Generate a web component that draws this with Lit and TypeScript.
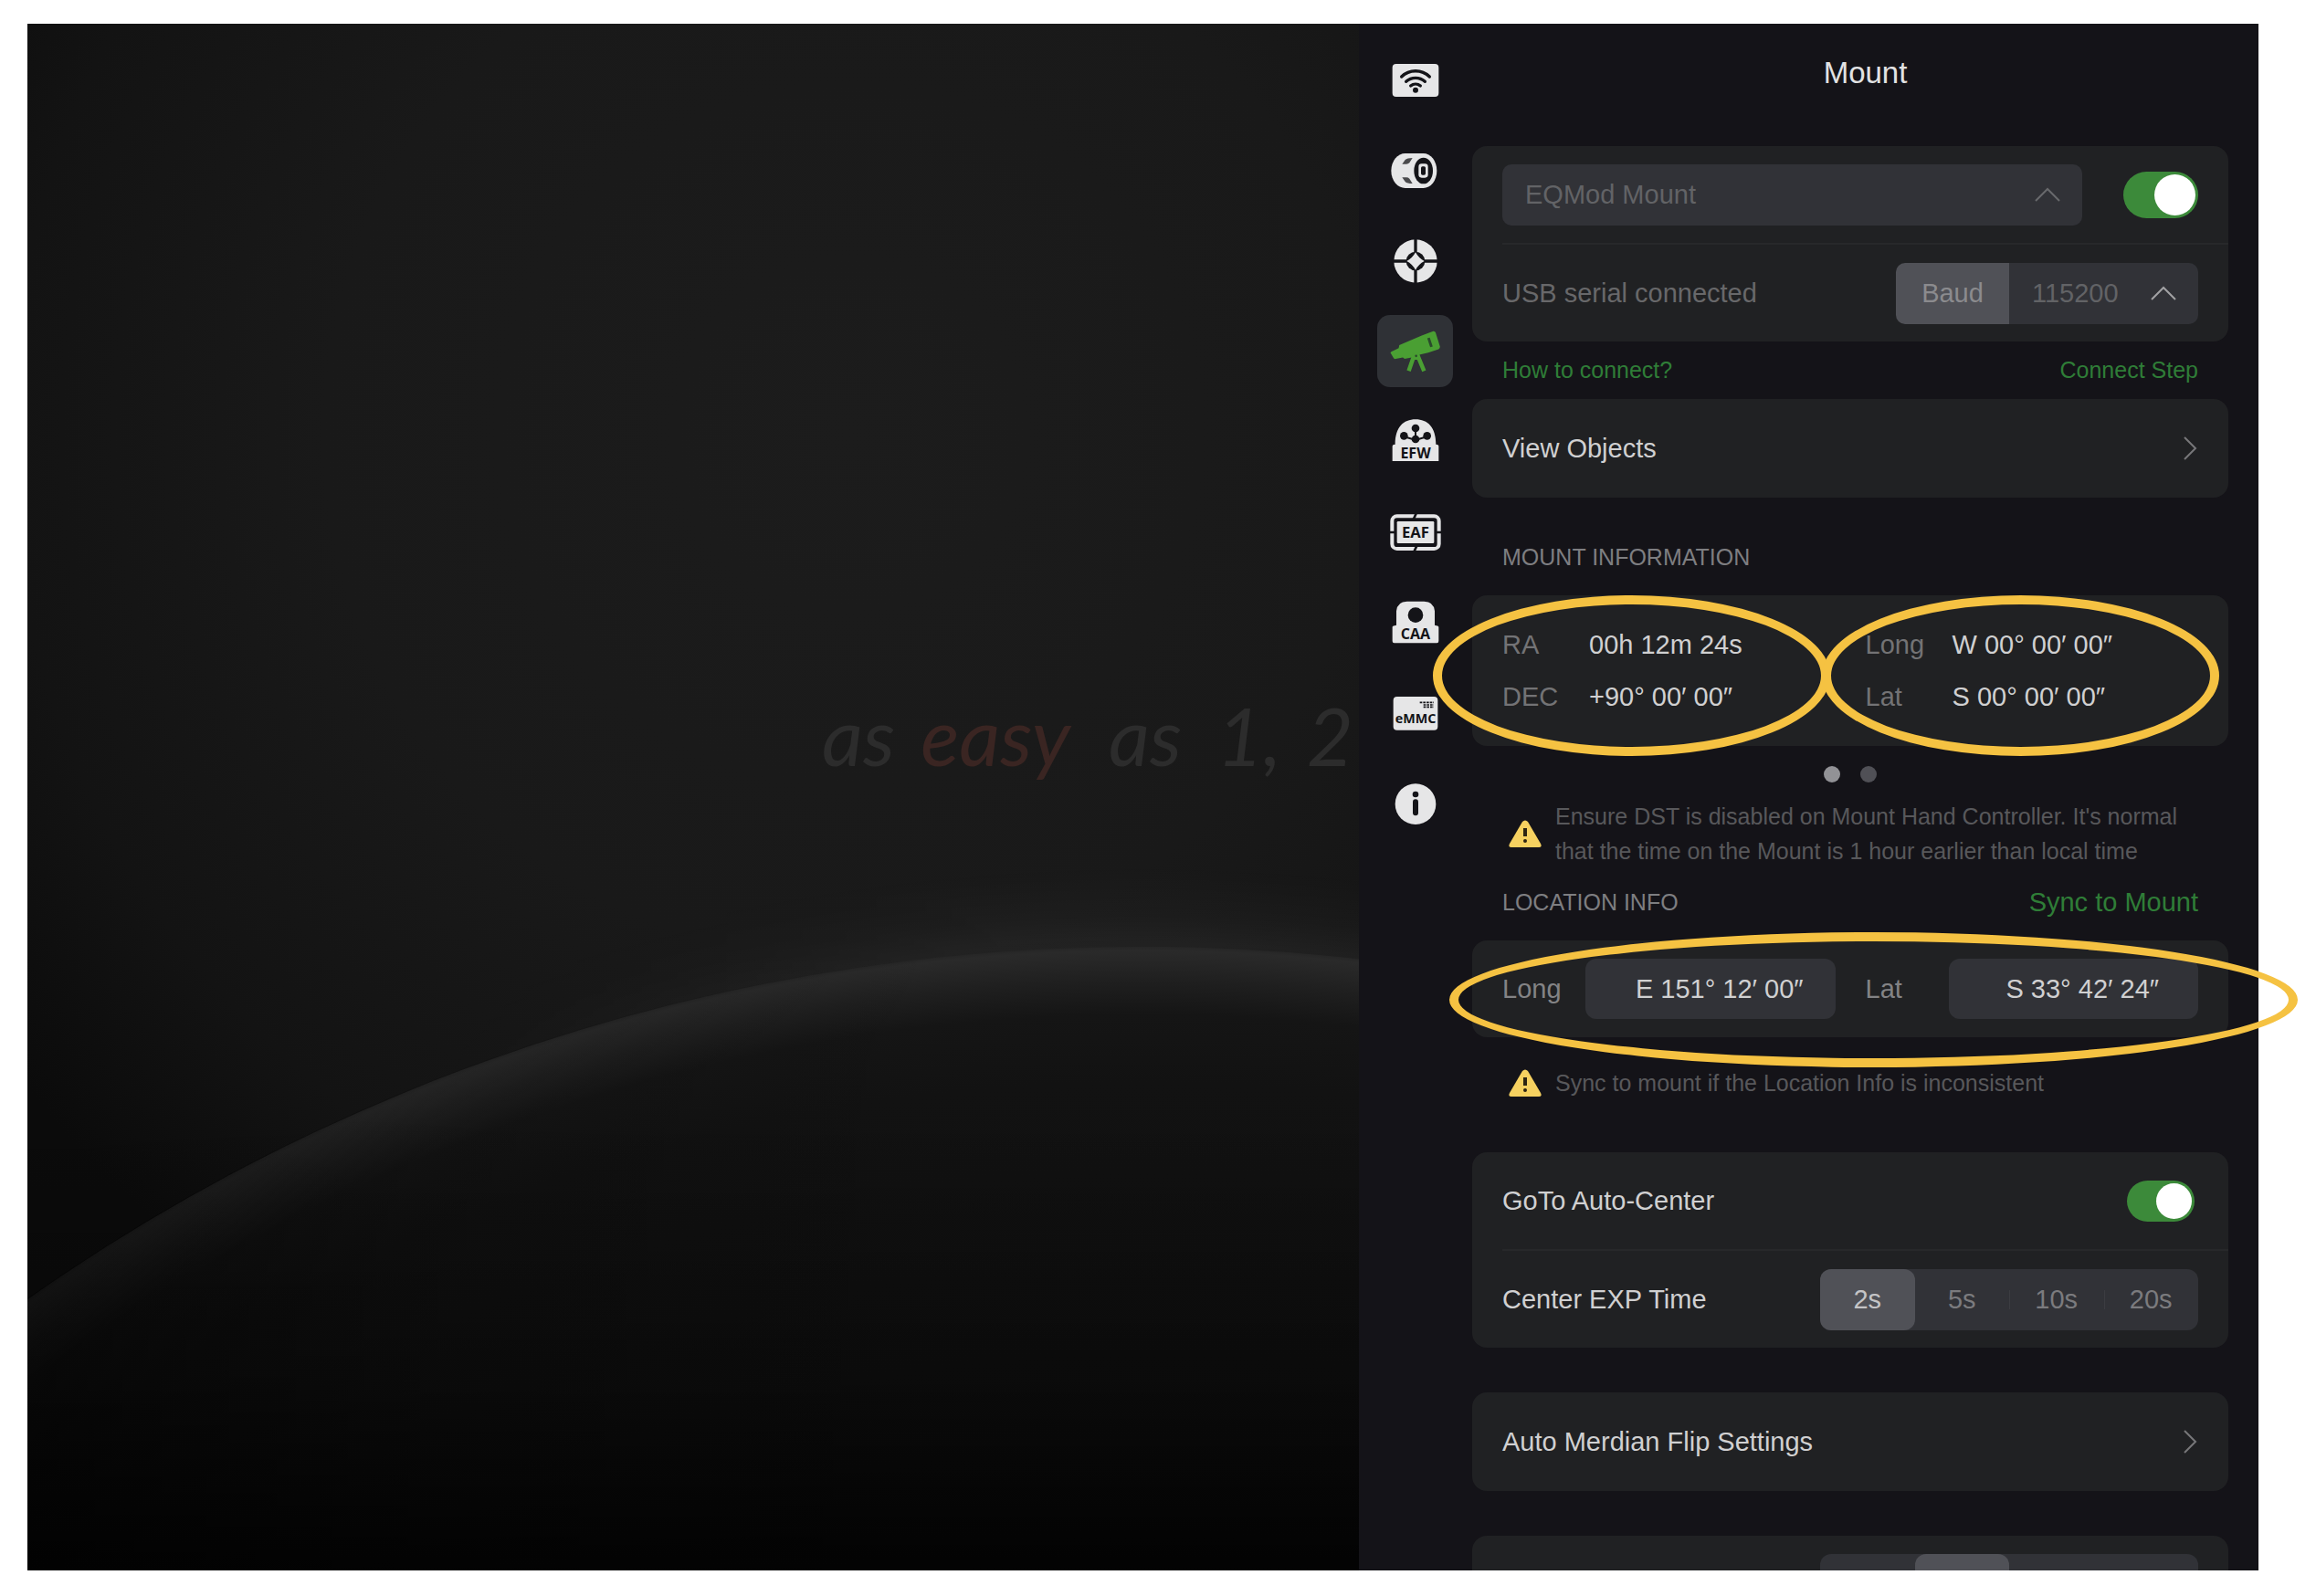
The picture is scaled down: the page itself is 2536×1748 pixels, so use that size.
import { LitElement, html, svg, css, nothing } from "lit";
import { customElement, property, state } from "lit/decorators.js";
import { classMap } from "lit/directives/class-map.js";

const icons: Record<string, unknown> = {
  wifi: svg`
    <rect x="-76" y="-54" width="152" height="108" rx="12" fill="currentColor"/>
    <g fill="none" stroke="#141418" stroke-width="10" stroke-linecap="round">
      <path d="M-46 -12 A66 66 0 0 1 46 -12"/>
      <path d="M-31 4 A46 46 0 0 1 31 4"/>
      <path d="M-16 18 A25 25 0 0 1 16 18"/>
    </g>
    <circle cx="0" cy="32" r="9" fill="#141418"/>`,
  camera: svg`
    <path d="M-34 -57 H26 A44 57 0 0 1 26 57 H-34 A46 57 0 0 1 -34 -57Z" fill="currentColor"/>
    <path d="M-44 -22 L-34 -36 Q-28 -42 -10 -42 L-20 -26 Q-24 -22 -30 -22Z M-44 22 L-34 36 Q-28 42 -10 42 L-20 26 Q-24 22 -30 22Z" fill="#4a4a4c"/>
    <ellipse cx="26" cy="0" rx="31" ry="43" fill="#141418"/>
    <rect x="10" y="-23" width="31" height="46" rx="10" fill="currentColor"/>
    <rect x="18" y="-14" width="15" height="28" rx="5" fill="#141418"/>`,
  guide: svg`
    <circle cx="0" cy="0" r="71" fill="currentColor"/>
    <circle cx="0" cy="0" r="31" fill="#141418"/>
    <path d="M-72 0 H72 M0 -72 V72" stroke="#141418" stroke-width="10"/>
    <path d="M0 -29 Q10 -10 29 0 Q10 10 0 29 Q-10 10 -29 0 Q-10 -10 0 -29Z" fill="currentColor"/>`,
  mount: svg`
    <g transform="translate(-1 2) scale(0.97)">
      <path d="M-80 -2 L-56 -14 L-54 -24 L22 -56 L61 -71 Q67 -72 69 -66 L84 -18 Q84 -12 79 -10 L44 2 L14 9 L8 14 L-36 23 L-42 18 L-66 23 Q-72 24 -74 19 L-84 2 Z" fill="currentColor"/>
      <path d="M-2 6 L-22 64 M6 6 L30 64" stroke="currentColor" stroke-width="14"/>
      <path d="M-8 8 H14 L12 26 H-6Z" fill="currentColor"/>
      <circle cx="3" cy="13" r="4" fill="#2a4a2c"/>
      <path d="M45 -48 L55 -18" stroke="#2a4a2c" stroke-width="9"/>
    </g>`,
  efw: svg`
    <path d="M-76 63 V14 Q-76 8 -67 8 C-67 -48 -40 -74 0 -74 C40 -74 67 -48 67 8 Q76 8 76 14 V63Z" fill="currentColor"/>
    <path d="M-37 -17 Q-20 -12 0 -6 Q20 -12 37 -17 M0 -44 V-6" stroke="#141418" stroke-width="6" fill="none"/>
    <circle cx="0" cy="-45" r="13" fill="#141418"/><circle cx="-38" cy="-20" r="13" fill="#141418"/>
    <circle cx="38" cy="-20" r="13" fill="#141418"/><circle cx="0" cy="-9" r="13" fill="#141418"/>
    <text class="glyph" x="0" y="54" font-size="48">EFW</text>`,
  eaf: svg`
    <rect x="-77" y="-53" width="154" height="107" rx="16" fill="none" stroke="currentColor" stroke-width="12"/>
    <path d="M-8 -40 L4 -66 M-6 66 L6 40 M-90 0 H-66 M66 0 H90" stroke="#141418" stroke-width="8"/>
    <rect x="-61" y="-36" width="122" height="72" rx="4" fill="currentColor"/>
    <text class="glyph" x="0" y="18" font-size="50">EAF</text>`,
  caa: svg`
    <path d="M-76 64 V14 Q-76 10 -63 8 V-38 Q-60 -70 -28 -70 H28 Q60 -70 63 -38 V8 Q76 10 76 14 V60 Q76 67 70 67 H-70 Q-76 67 -76 60Z" fill="currentColor"/>
    <circle cx="0" cy="-25" r="25" fill="#141418"/>
    <text class="glyph" x="0" y="55" font-size="48">CAA</text>`,
  emmc: svg`
    <rect x="-73" y="-54" width="146" height="110" rx="12" fill="currentColor"/>
    <path d="M14 -35 H60 M26 -27 H60 M26 -20 H60" stroke="#141418" stroke-width="5" stroke-dasharray="8 3"/>
    <text class="glyph" x="0" y="33" font-size="43">eMMC</text>`,
  info: svg`
    <circle cx="0" cy="2" r="67" fill="currentColor"/>
    <circle cx="0" cy="-30" r="10" fill="#141418"/>
    <rect x="-9" y="-14" width="18" height="54" rx="9" fill="#141418"/>`,
};

const chevronUp = html`<svg class="chevron-up" viewBox="0 0 28 16" aria-hidden="true"><path d="M1 15 L14 2 L27 15"/></svg>`;
const chevronRight = html`<svg class="chevron-right" viewBox="0 0 16 26" aria-hidden="true"><path d="M1 1 L13 13 L1 25"/></svg>`;
const warning = html`<svg class="warning" viewBox="0 0 38 32" aria-hidden="true">
  <path d="M16 3 Q19 0 22 3 L36 27 Q38 31 34 31 H4 Q0 31 2 27Z" fill="#f6d160"/>
  <path d="M19 10 V19" stroke="#2c2412" stroke-width="4"/><circle cx="19" cy="24" r="2" fill="#2c2412"/></svg>`;

/* Settings rail with one button per device. */
@customElement("device-rail")
class DeviceRail extends LitElement {
  @state() private active = "mount";

  static styles = css`
    :host { display: flex; flex-direction: column; gap: 20px; padding: 22px 21px 0 20px; }
    .item {
      display: grid; place-items: center; width: 83px; height: 79px; padding: 0;
      border: 0; border-radius: 14px; background: none; color: #e6e6e7; cursor: pointer;
    }
    .item.on { background: #2f3136; color: #4a9f33; }
    .icon { width: 60px; height: 60px; }
    .glyph {
      font-family: "Open Sans", "Noto Sans", sans-serif; font-weight: 700;
      text-anchor: middle; fill: #141418;
    }
  `;

  render() {
    return Object.keys(icons).map(
      (id) => html`<button
        class=${classMap({ item: true, on: this.active === id })}
        aria-label=${id}
        @click=${() => (this.active = id)}
      ><svg class="icon" viewBox="-90 -90 180 180">${icons[id]}</svg></button>`
    );
  }
}

/* Background artwork behind the slogan. */
@customElement("start-canvas")
class StartCanvas extends LitElement {
  static styles = css`
    :host { display: block; position: relative; overflow: hidden; background: #1a1a1a; }
    .art { position: absolute; inset: 0; width: 100%; height: 100%; }
    .slogan {
      position: relative; margin: 0; padding: 724px 0 0 870px; white-space: nowrap;
      font: italic 400 88px/110px Lato, "Open Sans", sans-serif; color: #2c2c2c;
      display: flex; gap: 28px;
    }
    .accent { color: #3a2522; margin-right: 14px; }
    .count { margin-left: 10px; }
  `;

  render() {
    return html`
      <svg class="art" viewBox="0 0 1458 1694" preserveAspectRatio="xMaxYMid slice" aria-hidden="true">
        <defs>
          <radialGradient id="sky" gradientUnits="userSpaceOnUse" cx="900" cy="450" r="1150">
            <stop offset="0" stop-color="#1c1c1c"/><stop offset="0.5" stop-color="#191919"/>
            <stop offset="0.8" stop-color="#131313"/><stop offset="1" stop-color="#0b0b0b"/>
          </radialGradient>
          <radialGradient id="glow" gradientUnits="userSpaceOnUse" cx="1220" cy="3131" r="2210">
            <stop offset="0.957" stop-color="#fff" stop-opacity="0.05"/>
            <stop offset="0.975" stop-color="#fff" stop-opacity="0.02"/>
            <stop offset="1" stop-color="#fff" stop-opacity="0"/>
          </radialGradient>
          <radialGradient id="planet" gradientUnits="userSpaceOnUse" cx="1220" cy="3131" r="2120">
            <stop offset="0.65" stop-color="#0c0c0c"/><stop offset="0.93" stop-color="#121212"/>
            <stop offset="0.965" stop-color="#151515"/><stop offset="0.982" stop-color="#1f1f1f"/>
            <stop offset="0.998" stop-color="#2a2a2a"/><stop offset="1" stop-color="#262626"/>
          </radialGradient>
          <linearGradient id="side" gradientUnits="userSpaceOnUse" x1="0" x2="1458" y1="0" y2="0">
            <stop offset="0" stop-color="#000" stop-opacity="0.5"/>
            <stop offset="0.3" stop-color="#000" stop-opacity="0.15"/>
            <stop offset="0.7" stop-color="#000" stop-opacity="0"/>
          </linearGradient>
          <linearGradient id="sideGlow" x1="0" x2="1" y1="0" y2="0">
            <stop offset="0.3" stop-color="#000"/><stop offset="0.75" stop-color="#fff"/>
          </linearGradient>
          <mask id="fade"><rect width="1458" height="1694" fill="url(#sideGlow)"/></mask>
          <linearGradient id="floor" x1="0" x2="0" y1="0" y2="1">
            <stop offset="0.7" stop-color="#000" stop-opacity="0"/>
            <stop offset="0.88" stop-color="#000" stop-opacity="0.3"/>
            <stop offset="1" stop-color="#000" stop-opacity="0.8"/>
          </linearGradient>
        </defs>
        <rect width="1458" height="1694" fill="url(#sky)"/>
        <g mask="url(#fade)"><circle cx="1220" cy="3131" r="2210" fill="url(#glow)"/></g>
        <circle cx="1220" cy="3131" r="2120" fill="url(#planet)"/>
        <circle cx="1220" cy="3131" r="2121" fill="url(#side)"/>
        <rect width="1458" height="1694" fill="url(#floor)"/>
      </svg>
      <p class="slogan"><span>as</span><span class="accent">easy</span><span>as</span><span class="count">1,</span><span>2</span></p>
    `;
  }
}

/* Row of mutually exclusive choices. */
@customElement("segment-choice")
class SegmentChoice extends LitElement {
  @property() name = "";
  @property({ type: Array }) options: string[] = [];
  @property({ type: Number }) selected = 0;

  static styles = css`
    :host { display: block; }
    .group {
      display: grid; grid-auto-flow: column; grid-auto-columns: 1fr; width: 414px; height: 67px;
      margin: 0; padding: 0; border: 0; border-radius: 12px; background: #313237;
    }
    .choice {
      display: grid; place-items: center; position: relative; border-radius: 12px;
      font-size: 29px; line-height: 36px; color: #7b7b7e; cursor: pointer;
    }
    .choice.on { background: #505157; color: #c4c4c6; }
    .choice.split::before {
      content: ""; position: absolute; left: 0; top: 23px; bottom: 23px; width: 1px; background: #3b3c41;
    }
    .radio { position: absolute; inset: 0; margin: 0; opacity: 0; cursor: pointer; }
  `;

  render() {
    return html`<fieldset class="group" aria-label=${this.name}>
      ${this.options.map(
        (text, i) => html`<label class=${classMap({
          choice: true,
          on: i === this.selected,
          split: i !== this.selected && i - 1 !== this.selected && i > 0,
        })}>
          <input class="radio" type="radio" name=${this.name} aria-label=${text || `Option ${i + 1}`}
            .checked=${i === this.selected} @change=${() => (this.selected = i)} />${text || nothing}</label>`
      )}
    </fieldset>`;
  }
}

@customElement("app-root")
class AppRoot extends LitElement {
  static styles = css`
    :host {
      display: block; box-sizing: border-box; height: 100vh; padding: 26px 63px 28px 30px;
      background: #fff; font-family: "Liberation Sans", Arial, sans-serif; font-size: 29px; line-height: 36px;
      color: #d0d0d1;
    }
    .screen {
      display: grid; grid-template-columns: 1458fr 985fr; grid-template-rows: minmax(0, 1fr);
      height: 100%; overflow-x: visible; overflow-y: clip; background: #141318;
    }
    .side { display: grid; grid-template-columns: auto minmax(0, 1fr); align-items: start; }
    .panel { display: flex; flex-direction: column; padding-right: 33px; }
    .title {
      margin: 0; padding: 34px 0 60px 33px; font-size: 33px; line-height: 40px; font-weight: 400;
      text-align: center; color: #e2e2e3;
    }
    .card { position: relative; border-radius: 16px; background: #202123; }
    .row {
      display: flex; align-items: center; justify-content: space-between; box-sizing: border-box;
      min-height: 106px; padding: 0 33px; gap: 33px;
    }
    .row + .row { min-height: 108px; padding-left: 0; margin-left: 33px; border-top: 2px solid #27282a; }
    .link-row { min-height: 108px; color: inherit; text-decoration: none; }
    .dim { color: #68686a; }
    .mid { color: #838385; }
    .spaced { margin-top: 49px; }
    .after-note { margin-top: 57px; }

    .picker {
      display: grid; grid-template-columns: minmax(0, 1fr) auto; align-items: center; height: 67px;
      border-radius: 10px; background: #313237; overflow: hidden;
    }
    .picker.wide { flex: 1; max-width: 635px; }
    .picker > .select { grid-area: 1 / 1 / 2 / 3; }
    .picker > .chevron-up { grid-area: 1 / 2 / 2 / 3; margin-right: 24px; pointer-events: none; }
    .select {
      appearance: none; width: 100%; height: 67px; padding: 0 60px 0 25px; border: 0; background: none;
      font: inherit; color: #626366;
    }
    .chevron-up { width: 28px; height: 16px; fill: none; stroke: #68696c; stroke-width: 2; }
    .chevron-right { width: 16px; height: 26px; fill: none; stroke: #77777a; stroke-width: 2; }
    .baud { display: flex; border-radius: 10px; overflow: hidden; }
    .baud .picker { width: 207px; border-radius: 0; }
    .baud .chevron-up { stroke: #a2a2a4; }
    .baud-label { width: 124px; line-height: 67px; text-align: center; background: #505157; color: #8b8b8e; }

    .toggle {
      appearance: none; box-sizing: border-box; display: flex; justify-content: flex-end;
      flex: none; width: 82px; height: 51px; margin: 0; padding: 3px; border-radius: 26px;
      background: #3b3c40; cursor: pointer;
    }
    .toggle:checked { background: #3c8a3a; }
    .toggle:not(:checked) { justify-content: flex-start; }
    .toggle::before { content: ""; width: 45px; height: 45px; border-radius: 50%; background: #fff; }
    .toggle.small { width: 74px; height: 45px; margin-right: 4px; }
    .toggle.small::before { width: 39px; height: 39px; }

    .links { display: flex; justify-content: space-between; padding: 13px 33px 14px; font-size: 25px; }
    .green { color: #2f7d37; text-decoration: none; }
    .section {
      margin: 0; padding: 49px 33px 26px; font-size: 25px; line-height: 32px; font-weight: 400; color: #7e7e81;
    }
    .section-row { display: flex; justify-content: space-between; padding: 20px 33px 25px; line-height: 34px; }
    .section-row .section { padding: 0; line-height: 34px; }
    .sync { padding: 0; border: 0; background: none; font: inherit; line-height: 34px; color: #2f7d37; cursor: pointer; }

    .pair { display: flex; gap: 33px; }
    .info { padding: 26px 33px 25px; }
    .facts { flex: 1; display: grid; grid-template-columns: 95px 1fr; margin: 0; line-height: 57px; }
    .facts .term { color: #737375; }
    .facts .value { margin: 0; }
    .field { flex: 1; display: grid; grid-template-columns: 91px minmax(0, 1fr); align-items: center; }
    .text {
      box-sizing: border-box; width: 100%; height: 66px; padding: 0 0 0 20px; border: 0; border-radius: 12px;
      background: #313237; font: inherit; color: inherit; text-align: center;
    }

    .dots { display: flex; justify-content: center; gap: 22px; padding: 22px 0 18px; }
    .dot { width: 18px; height: 18px; padding: 0; border: 0; border-radius: 50%; background: #505056; }
    .dot.on { background: #929296; }
    .note {
      display: flex; align-items: center; gap: 14px; margin: 0; padding: 0 33px 0 39px;
      font-size: 25px; line-height: 38px; color: #58585b;
    }
    .note.below { margin-top: 31px; }
    .warning { flex: none; width: 38px; height: 32px; }

    .mark {
      position: absolute; box-sizing: border-box; border: 10px solid #f5c242; border-radius: 50%;
      pointer-events: none;
    }
    .mark.first { left: -43px; width: 435px; top: 0; bottom: -11px; }
    .mark.second { right: 10px; width: 435px; top: 0; bottom: -11px; }
    .mark.third { left: -25px; right: -76px; top: -9px; bottom: -33px; }
  `;

  private facts(items: [string, string][]) {
    return html`<dl class="facts">
      ${items.map(([term, value]) => html`<dt class="term">${term}</dt><dd class="value">${value}</dd>`)}
    </dl>`;
  }

  render() {
    return html`
      <main class="screen">
        <start-canvas></start-canvas>
        <div class="side">
          <device-rail></device-rail>
          <section class="panel">
            <h1 class="title">Mount</h1>

            <div class="card">
              <div class="row">
                <div class="picker wide">
                  <select class="select" aria-label="Mount model"><option>EQMod Mount</option></select>
                  ${chevronUp}
                </div>
                <input class="toggle" type="checkbox" role="switch" aria-label="Mount connection" checked />
              </div>
              <div class="row">
                <span class="dim">USB serial connected</span>
                <div class="baud">
                  <label class="baud-label" for="baud">Baud</label>
                  <div class="picker">
                    <select class="select" id="baud"><option>115200</option></select>
                    ${chevronUp}
                  </div>
                </div>
              </div>
            </div>

            <div class="links">
              <a class="green" href="#help">How to connect?</a>
              <a class="green" href="#steps">Connect Step</a>
            </div>

            <a class="card row link-row" href="#objects"><span>View Objects</span>${chevronRight}</a>

            <h2 class="section">MOUNT INFORMATION</h2>
            <div class="card info">
              <div class="pair">
                ${this.facts([["RA", "00h 12m 24s"], ["DEC", "+90° 00′ 00″"]])}
                ${this.facts([["Long", "W 00° 00′ 00″"], ["Lat", "S 00° 00′ 00″"]])}
              </div>
              <span class="mark first"></span>
              <span class="mark second"></span>
            </div>
            <div class="dots">
              <button class="dot on" aria-label="Page 1"></button>
              <button class="dot" aria-label="Page 2"></button>
            </div>

            <p class="note">${warning}<span>Ensure DST is disabled on Mount Hand Controller. It's normal that the time on the Mount is 1 hour earlier than local time</span></p>

            <div class="section-row">
              <h2 class="section">LOCATION INFO</h2>
              <button class="sync">Sync to Mount</button>
            </div>
            <div class="card">
              <div class="row">
                <div class="field">
                  <label class="mid" for="long">Long</label>
                  <input class="text" id="long" value="E 151° 12′ 00″" />
                </div>
                <div class="field">
                  <label class="mid" for="lat">Lat</label>
                  <input class="text" id="lat" value="S 33° 42′ 24″" />
                </div>
              </div>
              <span class="mark third"></span>
            </div>
            <p class="note below">${warning}<span>Sync to mount if the Location Info is inconsistent</span></p>

            <div class="card after-note">
              <div class="row">
                <label for="center">GoTo Auto-Center</label>
                <input class="toggle small" id="center" type="checkbox" role="switch" checked />
              </div>
              <div class="row">
                <span>Center EXP Time</span>
                <segment-choice name="exposure" .options=${["2s", "5s", "10s", "20s"]} .selected=${0}></segment-choice>
              </div>
            </div>

            <a class="card row link-row spaced" href="#flip"><span>Auto Merdian Flip Settings</span>${chevronRight}</a>

            <div class="card spaced">
              <div class="row">
                <span></span>
                <segment-choice name="next" .options=${["", "", "", ""]} .selected=${1}></segment-choice>
              </div>
            </div>
          </section>
        </div>
      </main>
    `;
  }
}
